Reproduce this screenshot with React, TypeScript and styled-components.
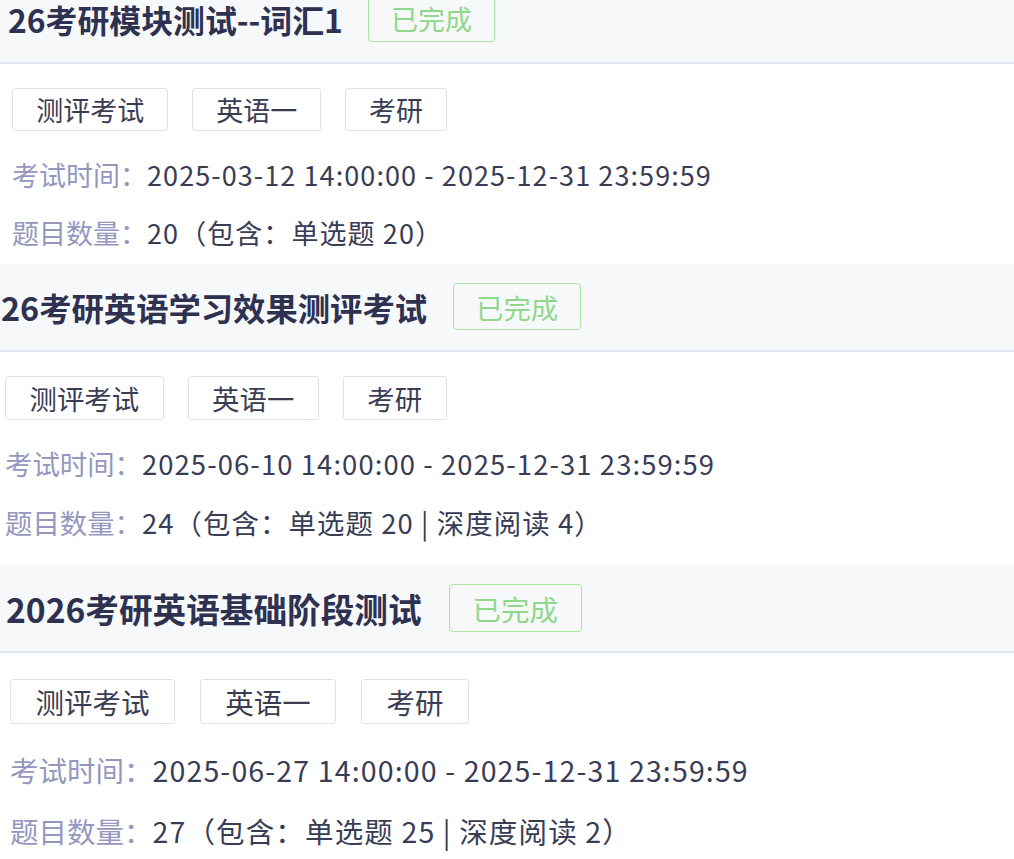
import styled, { createGlobalStyle } from 'styled-components';

type Exam = {
  title: string;
  tags: string[];
  time: string;
  count: string;
  size: number;
  inset: number;
  tail: number;
};

const exams: Exam[] = [
  {
    title: '26考研模块测试--词汇1',
    tags: ['测评考试', '英语一', '考研'],
    time: '2025-03-12 14:00:00 - 2025-12-31 23:59:59',
    count: '20（包含：单选题 20）',
    size: 27,
    inset: 12,
    tail: 2,
  },
  {
    title: '26考研英语学习效果测评考试',
    tags: ['测评考试', '英语一', '考研'],
    time: '2025-06-10 14:00:00 - 2025-12-31 23:59:59',
    count: '24（包含：单选题 20 | 深度阅读 4）',
    size: 27.4,
    inset: 5,
    tail: 13,
  },
  {
    title: '2026考研英语基础阶段测试',
    tags: ['测评考试', '英语一', '考研'],
    time: '2025-06-27 14:00:00 - 2025-12-31 23:59:59',
    count: '27（包含：单选题 25 | 深度阅读 2）',
    size: 28.5,
    inset: 10,
    tail: 0,
  },
];

function App() {
  return (
    <>
      <GlobalStyle />
      <ExamList>
        {exams.map((exam) => (
          <Card key={exam.title} $size={exam.size} $tail={exam.tail}>
            <Header $inset={exam.inset}>
              <Title>{exam.title}</Title>
              <Badge>已完成</Badge>
            </Header>
            <Body $inset={exam.inset}>
              <Tags>
                {exam.tags.map((tag) => (
                  <Tag key={tag}>{tag}</Tag>
                ))}
              </Tags>
              <InfoLine $first>
                <Label>考试时间：</Label>
                <Value>{exam.time}</Value>
              </InfoLine>
              <InfoLine>
                <Label>题目数量：</Label>
                <Value>{exam.count}</Value>
              </InfoLine>
            </Body>
          </Card>
        ))}
      </ExamList>
    </>
  );
}

const GlobalStyle = createGlobalStyle`
  body {
    margin: 0;
    background: #ffffff;
    overflow: hidden;
    font-family: "Noto Sans CJK SC", "Noto Sans", sans-serif;
  }
`;

const ExamList = styled.div`
  display: flex;
  flex-direction: column;
  margin-top: -24px;
`;

const Card = styled.section<{ $size: number; $tail: number }>`
  font-size: ${(p) => p.$size}px;
  padding-bottom: ${(p) => p.$tail}px;
  color: #393c55;
`;

const Header = styled.div<{ $inset: number }>`
  display: flex;
  align-items: center;
  gap: 0.95em;
  height: 86px;
  padding-left: ${(p) => p.$inset - 4}px;
  background: #f7f8fa;
  border-bottom: 2px solid #e3e8f0;
`;

const Title = styled.h2`
  margin: 0;
  font-size: 1.18em;
  font-weight: 700;
  color: #2e3150;
  white-space: nowrap;
`;

const Badge = styled.span`
  display: inline-flex;
  align-items: center;
  box-sizing: border-box;
  height: 1.7em;
  padding: 0 0.8em;
  border: 1.5px solid #a8e4a2;
  border-radius: 4px;
  color: #8fd889;
`;

const Body = styled.div<{ $inset: number }>`
  padding: 0.9em 0 0 ${(p) => p.$inset}px;
`;

const Tags = styled.div`
  display: flex;
  gap: 0.87em;
`;

const Tag = styled.span`
  display: inline-flex;
  align-items: center;
  box-sizing: border-box;
  height: 1.6em;
  padding: 0 0.86em;
  border: 1px solid #dde3ec;
  border-radius: 3px;
  color: #3a3d52;
`;

const InfoLine = styled.div<{ $first?: boolean }>`
  margin-top: ${(p) => (p.$first ? '0.52em' : '0')};
  line-height: 2.15em;
  white-space: nowrap;
`;

const Label = styled.span`
  color: #9597bf;
`;

const Value = styled.span`
  letter-spacing: 0.04em;
`;

export default App;
